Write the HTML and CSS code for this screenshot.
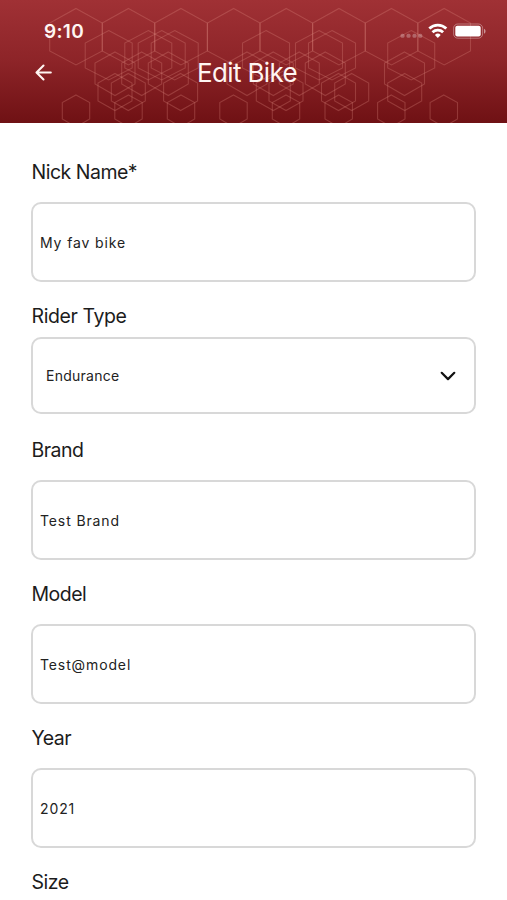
FILE: index.html
```
<!DOCTYPE html>
<html lang="en">
<head>
<meta charset="utf-8">
<title>Edit Bike</title>
<link rel="stylesheet" href="styles.css">
</head>
<body>
<header class="header">
  <svg class="pattern" width="507" height="123" viewBox="0 0 507 123" aria-hidden="true">
    <defs>
      <polygon id="xl" points="0,8.5 26.3,23 26.3,51 0,65 -26.3,51 -26.3,23"/>
      <polygon id="lg" points="0,30.5 23.5,43 23.5,68 0,80 -23.5,68 -23.5,43"/>
      <polygon id="md" points="0,52 20,63 20,84 0,95.5 -20,84 -20,63"/>
      <polygon id="sm" points="0,73.5 17,83 17,101 0,110.5 -17,101 -17,83"/>
      <polygon id="xs" points="0,95 13.7,102.5 13.7,119 0,127 -13.7,119 -13.7,102.5"/>
    </defs>
    <use href="#xl" x="76"/><use href="#xl" x="128.5"/><use href="#xl" x="181"/><use href="#xl" x="233.7"/>
    <use href="#xl" x="286.3"/><use href="#xl" x="339"/><use href="#xl" x="391.5"/><use href="#xl" x="444.2"/>
    <use href="#lg" x="108.7"/><use href="#lg" x="148.3"/><use href="#lg" x="161.7"/><use href="#lg" x="174.7"/>
    <use href="#lg" x="266"/><use href="#lg" x="319"/><use href="#lg" x="332"/><use href="#lg" x="411.2"/>
    <use href="#md" x="115"/><use href="#md" x="141.7"/><use href="#md" x="168.3"/><use href="#md" x="247"/>
    <use href="#md" x="273.3"/><use href="#md" x="299.3"/><use href="#md" x="325.3"/><use href="#md" x="404.5"/>
    <use href="#sm" x="115"/><use href="#sm" x="128.3"/><use href="#sm" x="180.6"/><use href="#sm" x="273.3"/>
    <use href="#sm" x="286"/><use href="#sm" x="338.5"/><use href="#sm" x="351.7"/><use href="#sm" x="404.7"/>
    <use href="#xs" x="76"/><use href="#xs" x="128.5"/><use href="#xs" x="181"/><use href="#xs" x="233.5"/>
    <use href="#xs" x="286"/><use href="#xs" x="338.7"/><use href="#xs" x="391.3"/><use href="#xs" x="443.8"/>
  </svg>
  <div class="status">
    <span class="time">9:10</span>
    <svg class="indicators" width="88" height="18" viewBox="0 0 88 18" fill="#fff" aria-hidden="true">
      <g opacity=".28"><rect x="1.5" y="12.8" width="4" height="4" rx="1.5"/><rect x="7.5" y="12.8" width="4" height="4" rx="1.5"/><rect x="13.5" y="12.8" width="4" height="4" rx="1.5"/><rect x="19.3" y="12.8" width="4" height="4" rx="1.5"/></g>
      <g fill="none" stroke="#fff" stroke-width="2.8"><path d="M30.3 7.5a12.3 12.3 0 0 1 17 0"/><path d="M33.5 11.3a7.7 7.7 0 0 1 10.6 0"/></g>
      <path d="M38.8 17l-2.9-3a4.2 4.2 0 0 1 5.8 0z"/>
      <rect x="54.6" y="3" width="29" height="14.2" rx="4.2" fill="none" stroke="#fff" stroke-opacity=".35"/>
      <rect x="56.3" y="4.8" width="25.4" height="10.8" rx="2"/>
      <path d="M85 7.7c2 .8 2 4.2 0 5z" opacity=".5"/>
    </svg>
  </div>
  <div class="bar">
    <svg class="back" width="18" height="18" viewBox="0 0 18 18" aria-hidden="true"><path d="M15.800 8.500H1.800M8.500 1.500L1.500 8.500l7 7"/></svg>
    <h1 class="title">Edit Bike</h1>
  </div>
</header>
<main class="form">
  <label class="label" for="nick">Nick Name*</label>
  <input class="field" id="nick" value="My fav bike">
  <div class="label label-select">Rider Type</div>
  <div class="field select">
    <span>Endurance</span>
    <svg width="18" height="12" viewBox="0 0 18 12" aria-hidden="true"><path d="M2.700 2.800L9 9.100l6.300-6.300"/></svg>
  </div>
  <label class="label" for="brand">Brand</label>
  <input class="field" id="brand" value="Test Brand">
  <label class="label" for="model">Model</label>
  <input class="field" id="model" value="Test@model">
  <label class="label" for="year">Year</label>
  <input class="field" id="year" value="2021">
  <div class="label">Size</div>
</main>
</body>
</html>
```
FILE: styles.css
```
* { box-sizing: border-box; }
body {
  margin: 0;
  height: 900px;
  overflow: hidden;
  background: #fff;
  color: #1c1c1c;
  font-family: Inter, Roboto, sans-serif;
}
.header {
  position: relative;
  height: 123px;
  overflow: hidden;
  color: #fff5f2;
  background: linear-gradient(#a03135, #8d2428 50%, #6f1114);
}
.pattern {
  position: absolute;
  inset: 0;
  fill: none;
  stroke: #df8a80;
  stroke-opacity: .3;
  stroke-width: 1.1;
}
.status {
  position: relative;
  display: flex;
  justify-content: space-between;
  padding: 21px 20px 0 44px;
  height: 53px;
}
.time {
  font-size: 19px;
  font-weight: 600;
  line-height: 21px;
  letter-spacing: 0.3px;
}
.bar {
  position: relative;
  display: grid;
  grid-template-columns: 162px auto;
  align-items: center;
  height: 40px;
  padding-left: 35px;
}
.back {
  fill: none;
  stroke: #fff5f2;
  stroke-width: 2.1;
  stroke-linecap: round;
  stroke-linejoin: round;
}
.title {
  margin: 0;
  font-size: 26px;
  font-weight: 400;
  line-height: 40px;
  letter-spacing: -0.65px;
}
.form {
  display: flex;
  flex-direction: column;
  padding: 30px 31px 0;
}
.label {
  height: 38px;
  margin-bottom: 11px;
  font-size: 19.5px;
  line-height: 38px;
  letter-spacing: -0.5px;
  padding-left: 0.5px;
}
.label-select {
  margin-bottom: 2px;
  letter-spacing: -0.4px;
}
.field {
  width: 445px;
  height: 80px;
  flex: none;
  margin: 0 0 15px;
  padding: 0 7px;
  border: 2px solid #d8d8d8;
  border-radius: 10px;
  background: #fff;
  color: #222;
  font-family: inherit;
  font-size: 14px;
  letter-spacing: 0.88px;
  outline: none;
}
.select {
  display: flex;
  align-items: center;
  justify-content: space-between;
  height: 77px;
  margin-bottom: 17px;
  padding: 0 17px 0 13px;
  letter-spacing: 0.25px;
}
.select svg {
  fill: none;
  stroke: #111;
  stroke-width: 2.2;
  stroke-linecap: round;
  stroke-linejoin: round;
}
```
